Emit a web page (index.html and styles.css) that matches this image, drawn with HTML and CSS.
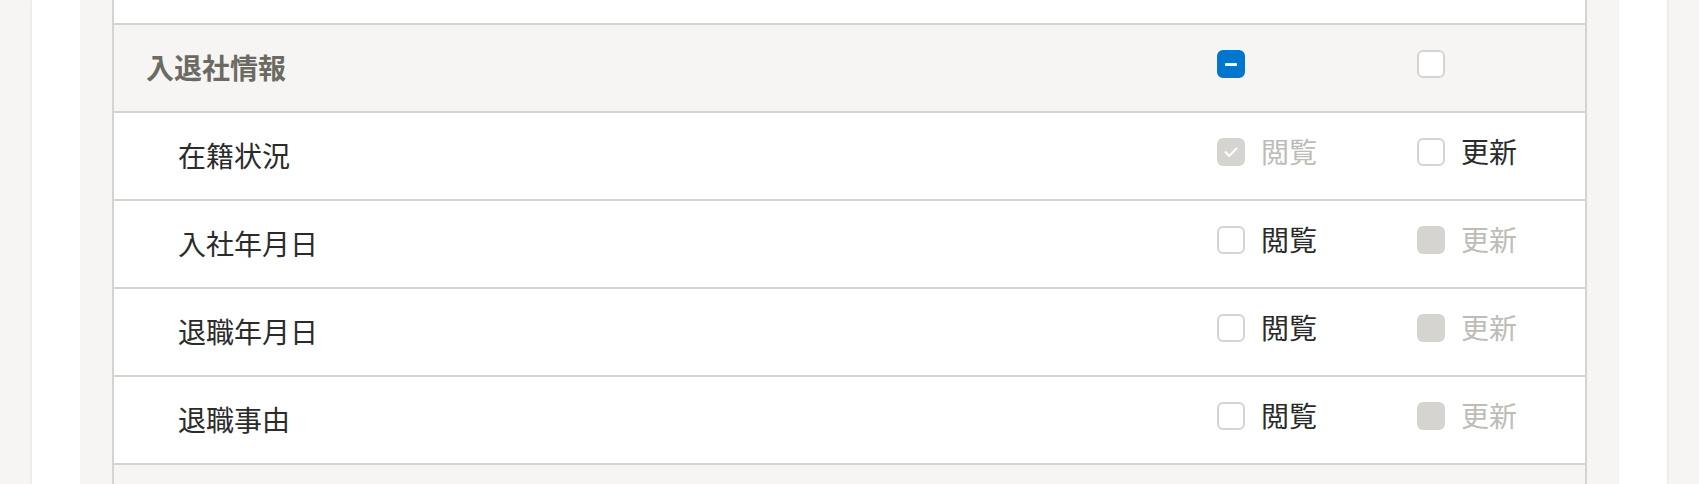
FILE: index.html
```html
<!DOCTYPE html>
<html lang="ja">
<head>
    <meta charset="UTF-8">
    <meta name="viewport" content="width=device-width, initial-scale=1.0">
    <title>権限設定</title>
    <link rel="stylesheet" href="styles.css">
</head>
<body>
    <div class="panel">
        <div class="section">
            <div class="perm-table">
                <!-- tail of the row above (scrolled out of view) -->
                <div class="perm-row tail"></div>

                <!-- 入退社情報 -->
                <div class="perm-row group">
                    <div class="perm-name">入退社情報</div>
                    <label class="perm-check"><span class="box mixed"></span></label>
                    <label class="perm-check"><span class="box"></span></label>
                </div>
                <div class="perm-row item">
                    <div class="perm-name">在籍状況</div>
                    <label class="perm-check disabled"><span class="box checked"></span><span class="label">閲覧</span></label>
                    <label class="perm-check"><span class="box"></span><span class="label">更新</span></label>
                </div>
                <div class="perm-row item">
                    <div class="perm-name">入社年月日</div>
                    <label class="perm-check"><span class="box"></span><span class="label">閲覧</span></label>
                    <label class="perm-check disabled"><span class="box"></span><span class="label">更新</span></label>
                </div>
                <div class="perm-row item">
                    <div class="perm-name">退職年月日</div>
                    <label class="perm-check"><span class="box"></span><span class="label">閲覧</span></label>
                    <label class="perm-check disabled"><span class="box"></span><span class="label">更新</span></label>
                </div>
                <div class="perm-row item">
                    <div class="perm-name">退職事由</div>
                    <label class="perm-check"><span class="box"></span><span class="label">閲覧</span></label>
                    <label class="perm-check disabled"><span class="box"></span><span class="label">更新</span></label>
                </div>

                <div class="perm-row group"></div>
            </div>
        </div>
    </div>
</body>
</html>
```

FILE: styles.css
```css
html, body {
    height: 100%;
}
body {
    margin: 0;
    padding: 0 32px;
    background-color: #f6f5f3;
    font-family: "Noto Sans CJK JP", "Noto Sans", sans-serif;
    color: #2b2b2b;
    overflow: hidden;
}
.panel {
    height: 100%;
    padding: 0 48px;
    background: #fff;
    box-shadow: 0 0 3px rgba(0, 0, 0, 0.12);
}
.section {
    height: 100%;
    padding: 0 32px;
    background-color: #f6f5f3;
    overflow: hidden;
}
.perm-table {
    border-left: 2px solid #d5d4d0;
    border-right: 2px solid #d5d4d0;
}
.perm-row {
    display: grid;
    grid-template-columns: 1fr 200px 168px;
    align-items: center;
    height: 86px;
    border-bottom: 2px solid #d5d4d0;
    background: #fff;
    font-size: 28px;
    line-height: 1.4;
}
.perm-row.tail {
    height: 23px;
}
.perm-row.group {
    background-color: #f6f5f3;
}
.perm-name {
    padding-left: 64px;
}
.group .perm-name {
    padding-left: 32px;
    font-weight: bold;
    color: #6b6a63;
}
.perm-check {
    display: flex;
    align-items: center;
    gap: 16px;
    padding-bottom: 8px;
    cursor: pointer;
}
.box {
    box-sizing: border-box;
    display: flex;
    align-items: center;
    justify-content: center;
    width: 28px;
    height: 28px;
    border: 2px solid #d5d4d0;
    border-radius: 6px;
    background: #fff;
}
.box.mixed {
    border-color: #0076cc;
    background-color: #0076cc;
}
.box.mixed::after {
    content: "";
    width: 12px;
    height: 3px;
    border-radius: 1px;
    background: #fff;
}
.disabled {
    cursor: default;
}
.disabled .box {
    background-color: #d5d4d0;
}
.disabled .label {
    color: #bdbcb6;
}
.box.checked::after {
    content: "";
    width: 10px;
    height: 5px;
    margin-top: -3px;
    border-left: 2.5px solid #fff;
    border-bottom: 2.5px solid #fff;
    transform: rotate(-45deg);
}
```
